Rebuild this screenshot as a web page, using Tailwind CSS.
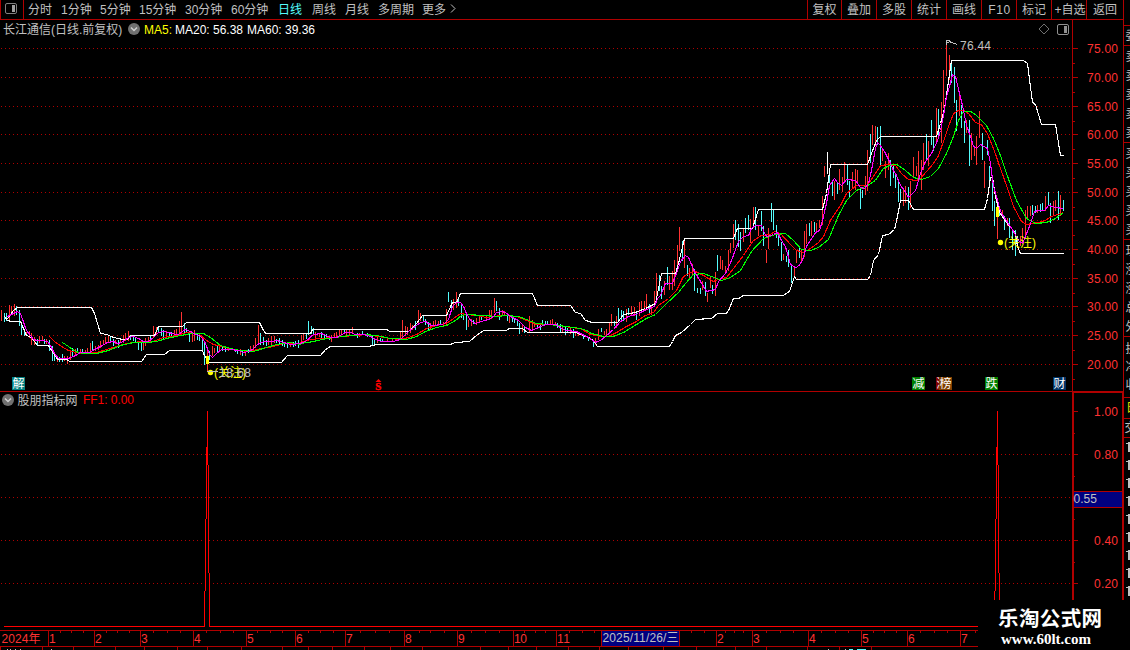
<!DOCTYPE html>
<html lang="zh-CN">
<head>
<meta charset="utf-8">
<title>长江通信 日线</title>
<script src="https://cdn.jsdelivr.net/npm/@tailwindcss/browser@4"></script>
</head>
<body class="relative flex h-[650px] w-[1130px] flex-col overflow-hidden bg-black font-['Liberation_Sans','Noto_Sans_CJK_SC',sans-serif] text-[12px] leading-[18px] text-[#c0c0c0]">

<!-- Period toolbar -->
<header class="flex h-5 w-[1124px] shrink-0 items-stretch border-r border-b border-[#b00000] leading-[20px] whitespace-nowrap">
  <div class="flex w-6 shrink-0 items-center border-x border-[#b00000] pl-1">
    <svg class="mb-0.5 h-[12px] w-[12px]" viewBox="0 0 12 12"><rect x="0.5" y="0.5" width="11" height="10" rx="1.5" fill="none" stroke="#808080"/><rect x="7" y="2" width="3" height="7" fill="#a0a0a0"/></svg>
  </div>
  <nav class="flex flex-1 pl-1">
    <span class="w-[33px]">分时</span><span class="w-[39px]">1分钟</span><span class="w-[39px]">5分钟</span><span class="w-[46px]">15分钟</span><span class="w-[46px]">30分钟</span><span class="w-[47px]">60分钟</span><span class="w-[34px] text-[#54fcfc]">日线</span><span class="w-[33px]">周线</span><span class="w-[33px]">月线</span><span class="w-[44px]">多周期</span><span class="w-[27px]">更多</span>
    <svg class="mt-1 h-[10px] w-[8px]" viewBox="0 0 8 10"><path d="M2 0.5 6 4.5 2 8.5" fill="none" stroke="#c0c0c0"/></svg>
  </nav>
  <div class="flex text-center">
    <span class="w-[34px] border-l border-[#b00000]">复权</span><span class="w-[35px] border-l border-[#b00000]">叠加</span><span class="w-[35px] border-l border-[#b00000]">多股</span><span class="w-[35px] border-l border-[#b00000]">统计</span><span class="w-[35px] border-l border-[#b00000]">画线</span><span class="w-[35px] border-l border-[#b00000] pl-px tracking-[0.6px]">F10</span><span class="w-[35px] border-l border-[#b00000]">标记</span><span class="w-[35px] border-l border-[#b00000] pl-0.5">+自选</span><span class="w-[37px] border-l border-[#b00000]">返回</span>
  </div>
</header>

<main class="flex min-h-0 flex-1">
  <section class="flex w-[1123px] shrink-0 flex-col">
    <!-- Price legend -->
    <div class="flex h-[18px] shrink-0">
      <div class="flex w-[1073px] items-center border-r border-[#b00000] pl-[3px] whitespace-nowrap">
        <span class="w-[125px] pt-0.5">长江通信(日线.前复权)</span>
        <svg class="h-[12px] w-[12px]" viewBox="0 0 12 12"><circle cx="6" cy="6" r="6" fill="#707070"/><path d="M3 4.5 6 7.5 9 4.5" fill="none" stroke="#d0d0d0" stroke-width="1.5"/></svg>
        <span class="ml-1 w-[31px] pt-0.5 text-[#ffff00]">MA5:</span>
        <span class="w-[72px] pt-0.5 text-white">MA20: 56.38</span>
        <span class="pt-0.5 text-white">MA60: 39.36</span>
        <svg class="ml-auto h-[12px] w-[12px]" viewBox="0 0 12 12"><path d="M6 1 11 6 6 11 1 6Z" fill="none" stroke="#707070"/></svg>
        <svg class="mr-[3px] ml-[7px] h-[12px] w-[12px]" viewBox="0 0 12 12"><rect x="0.5" y="1.5" width="11" height="10" rx="1.5" fill="none" stroke="#909090"/><rect x="7" y="3" width="3" height="7" fill="#909090"/></svg>
      </div>
    </div>
    <svg id="price" class="h-[353px] w-[1123px] shrink-0" viewBox="0 38 1123 353"></svg>
    <!-- Indicator pane -->
    <svg id="ind" class="h-[237px] w-[1123px] shrink-0" viewBox="0 391 1123 237"></svg>
    <!-- Time axis -->
    <svg id="time" class="h-[22px] w-[1123px] shrink-0" viewBox="0 628 1123 22"></svg>
  </section>
  <!-- Quote panel edge -->
  <aside class="flex w-[7px] shrink-0 flex-col overflow-hidden border-l border-[#b00000]">
    <svg id="side" class="h-[630px] w-[6px]" viewBox="1124 20 6 630"></svg>
  </aside>
</main>

<!-- Site mark -->
<div class="absolute right-0 bottom-0 h-[50px] w-[152px] bg-black">
  <svg class="h-full w-full" viewBox="978 600 152 50">
    <text x="998" y="626" fill="#fff" font-family="Noto Sans CJK SC" font-weight="700" font-size="20.5" textLength="104">乐淘公式网</text>
    <text x="1001" y="644" fill="#fff" font-family="Liberation Serif" font-weight="700" font-size="14.5" textLength="90" lengthAdjust="spacingAndGlyphs">www.60lt.com</text>
  </svg>
</div>

<script>
const NS = 'http://www.w3.org/2000/svg';
const RED = '#ff3232', CYAN = '#54fcfc', RULE = '#b00000';
const byId = id => document.getElementById(id);
function add(host, tag, attrs, text) {
  const el = document.createElementNS(NS, tag);
  for (const k in attrs) el.setAttribute(k, attrs[k]);
  if (text !== undefined) el.textContent = text;
  host.appendChild(el);
  return el;
}
const box = (h, x, y, w, ht, fill) => add(h, 'rect', {x, y, width: w, height: ht, fill, 'shape-rendering': 'crispEdges'});
const label = (h, x, y, s, fill, len, extra) => add(h, 'text', Object.assign({x, y, fill, 'font-size': 12}, len ? {textLength: len} : {}, extra || {}), s);
const grid = (h, y) => add(h, 'path', {d: `M1 ${y + .5}H1072`, stroke: RULE, 'stroke-dasharray': '1 3', 'shape-rendering': 'crispEdges'});

const P = byId('price'), I = byId('ind'), T = byId('time'), S = byId('side');

// Price scale
const levels = [48, 77, 106, 134, 163, 192, 220, 249, 278, 306, 335, 364];
levels.forEach((y, i) => {
  grid(P, y);
  box(P, 1073, y, 5, 1, RULE);
  box(P, 1073, y + 15, 2, 1, RULE);
  label(P, 1087, y + 5, (75 - 5 * i) + '.00', RED, 31);
});
box(P, 1072, 38, 1, 353, RULE);

// Series are stored in thirds of a pixel relative to each segment's origin.
const SEG = {
  A: [0, 280], B: [300, 270], C: [580, 140], E: [800, 30]
};
const bars = {
A: `4r90-123 13c99-126 19c100-125 28r75-125 34r78-105 43r72-108 49c78-105 58c92-138 64c128-165 73c150-168 79r158-166 88r155-175 94r160-195 103r172-197 112c178-196 118r168-190 127r170-185 133c178-192 139r178-192 148c180-215 157c200-243 163c220-245 172r228-246 178c232-246 187c222-246 193r228-243 202r230-254 211r210-240 217c205-230 226r208-225 232c205-220 241r208-220 247c208-220 256r210-218 262r205-224 271r190-218 277c183-215 286r200-215 295r195-210 301r185-205 310r180-195 316r172-190 325r170-188 331c168-190 340c178-200 346r180-192 355c180-204 361r175-190 370r165-190 376r160-185 385r153-185 391c165-180 400c170-185 406c173-190 415c183-210 424c190-213 430r188-212 436r175-200 445r172-188 451c165-185 460r138-175 469r142-165 475c138-160 484c145-168 490c150-178 499r155-168 508c160-168 514c158-170 523r150-165 529r148-172 538r125-160 544r96-160 553c130-160 559c145-160 568c155-186 577r160-188 583r150-183 592c160-180 598c163-185 607c170-215 613c190-255 622r215-275 628c215-240 637r200-230 643r205-220 652c198-220 658r195-215 667c203-214 676c205-216 685r205-213 706c208-218 712c208-222 721r208-225 727c212-228 736r215-230 745c208-220 751r200-215 760r195-210 766r175-205 775r135-195 781c160-195 790c172-195 799c180-200 805r175-195 814r170-195 823r168-190 829c178-190 838c175-195 847c180-200 853c188-202 862c190-204 871r190-203 880c188-203 886c183-198 895c180-205`,
B: `4r195-220 10r192-212 19c190-208 25c153-195 34c170-193 40c175-195 46r188-208 58r190-203 64c186-205 73c192-205 79c192-205 88c198-210 94r195-216 103r190-205 109r186-202 118r182-200 124r178-195 133c180-190 139r180-195 148r180-198 157r171-190 172c190-205 178r190-202 187c185-197 202c190-203 208r193-203 217c195-226 223c210-228 232r200-220 241c205-215 247c208-216 262r203-218 277r207-215 292r205-214 301r186-208 307r150-205 316r168-200 322r172-195 331r160-190 337r165-182 346c155-180 355r122-165 361r130-153 370c140-155 376c148-165 385c158-180 391r160-178 400r155-172 406r150-170 415r155-170 421c152-165 430r158-168 439r118-165 445c66-98 454c90-125 460r88-120 469r66-115 475c82-110 484c105-145 490c130-152 499c130-180 505r150-172 514r147-168 520c150-162 529r145-165 538r135-160 544c137-150 559r135-155 568r122-150 574r122-148 583r84-130 589c95-125 598c115-150 607r122-138 613r125-140 622c130-153 628r138-160 637c140-158 643c145-160 652c150-170 658c160-192 667r165-186 673c170-190 688r140-186 697r150-180 703r158-172 712c165-175 721c166-180 727c150-165 736c153-165 742c155-166 751r150-163 757r148-165 766r158-168 772c160-175 781c163-187 787r170-187 796c172-195 802c175-190 811r175-192 820c178-205 826r183-200 835r188-198 850c196-208 865c203-215 880c210-232 886r205-225 895r178-210 904c175-188 913r183-195 919r178-195 928r160-190 934r132-170 943c155-170 949r140-175 955c114-150 964c120-155 970r125-155 979c118-150 985c116-135`,
C: `124c510-540 130c515-543 139r507-548 145c507-525 154r500-530 163r503-528 169c515-540 178r486-530 184r485-515 193r483-512 199r462-510 208c492-520 214r498-525 223r453-490 229r400-485 238c405-455 244c440-477 253r425-467 262c382-435 268r410-450 277r393-450 283r360-440 292r315-380 298r262-335 307c305-365 313r305-385 322c375-408 328r385-422 337r372-410 343c388-453 352c445-460 361c445-462 367r425-452 376c428-470 382r460-486 391r408-445 397c435-462 406r398-468 412c347-393 421r348-387 427r360-390 436r380-400 445r330-393 451r310-340 460r252-325 466c240-300 475c252-323 481c278-335 490r265-308 496c235-280 505c225-270 511r238-310 520r202-255 526c202-270 535r255-290 544c213-275 550c260-320 559r330-370 565r265-327 574c190-248 580c208-270 589c255-295 595c280-320 604c308-365 610r342-362 619c350-368 625c330-383 634c375-430 643r385-412 649r330-370 658c318-355 664r332-365 673r275-353 679r252-313 688c250-290 694r245-290 703c247-278 709r250-280 718r240-265 727r168-255 733r80-113 748c85-130 757c122-168 763r125-182 772c130-163 778r88-150 787r113-158 793r66-130 802c73-135 808c125-175 817r97-145 826r87-150 832r90-128 841c143-208 847c150-175 856r108-165 862r30-155`,
E: `211c312-400 217r285-345 226r288-350 232c293-345 241c290-410 247r360-395 256r395-445 265r370-420 271c390-470 280c405-445 286c430-475 295c455-518 301c478-515 310r478-530 316r468-520 325c472-540 331r455-535 340r383-445 349r410-440 355r363-455 364r390-480 370r340-420 379c312-388 385r333-410 394c272-345 400c320-365 409r235-335 415c237-320 424r218-340 430r122-235 439r38-140 448r75-150 454c93-160 463c113-220 469c212-303 478r195-260 484c225-295 493c275-340 499r270-310 508c272-408 514r310-390 523r350-380 529r320-405 538r243-325 547c310-390 553r393-474 562c330-375 568c408-470 577c440-545 583c515-590 592r530-628 598c530-560 607r540-565 613c560-600 622r565-590 628c565-625 637c600-660 646c600-678 652c620-640 661r620-650 667r595-640 676r540-625 683r530-570 691r530-560 697c525-555 706c530-550 712r525-550 721c522-548 727c520-545 736r500-545 745c486-530 751c520-580 760r515-560 766r510-545 775c483-570 781r495-560 790c510-545`
};
for (const k in bars) {
  const [ox, oy] = SEG[k];
  for (const m of bars[k].matchAll(/(\d+)([rc])(\d+)-(\d+)/g)) {
    const y1 = Math.floor(m[3] / 3), y2 = Math.floor(m[4] / 3);
    box(P, ox + Math.floor(m[1] / 3), oy + y1, 1, y2 - y1, m[2] === 'r' ? RED : CYAN);
  }
}

const curves = [
['#ff0000', {
A: '148,168 163,185 185,200 205,212 225,218 250,220 290,217 320,208 350,200 380,190 420,184 460,183 490,173 530,166 560,157 595,161 620,180 640,192 665,200 700,208 745,215 785,206 820,198 850,190 900,190',
B: '0,218 30,208 60,205 100,203 130,199 160,195 200,194 235,200 270,206 300,208 325,202 350,192 380,175 410,167 440,160 460,145 480,130 500,132 530,136 560,141 600,137 625,136 650,140 680,150 710,162 745,163 780,166 810,172 840,176',
C: '0,566 30,584 60,589 85,588 110,578 140,558 170,543 195,526 220,516 235,495 265,475 290,450 310,410 330,397 345,395 370,405 400,424 415,418 440,413 460,385 490,345 520,300 545,285 570,283 583,274 600,280 630,312 650,330 670,337 690,326 715,308 730,290 750,240 780,195 800,160 830,137 862,135',
E: '202,465 225,430 242,405 265,402 285,405 305,430 325,449 350,450 362,445 380,425 400,400 415,375 430,335 445,290 460,250 475,240 490,240 505,250 525,278 545,284 562,310 580,355 600,415 620,465 640,530 665,575 680,582 715,578 735,570 755,558 789,547'}],
['#00ff00', {
A: '187,187 205,200 225,215 250,219 290,220 325,210 360,197 400,187 440,186 470,183 500,174 540,165 575,160 610,160 630,172 660,195 690,205 720,211 760,215 800,203 830,192 870,188 900,192',
B: '0,219 40,213 80,205 150,196 190,193 230,197 270,205 320,208 350,200 375,185 410,172 440,167 465,152 485,137 500,133 550,137 590,138 620,136 655,138 680,147 710,159 745,163 800,168 840,176',
C: '0,566 20,570 35,580 70,588 100,588 130,577 170,553 200,534 225,522 260,490 295,457 315,430 340,402 370,400 395,410 425,420 450,413 480,390 515,335 550,295 585,282 615,280 640,300 665,327 690,331 715,323 745,297 775,225 800,180 830,150 862,137',
E: '202,467 225,450 250,415 275,402 290,403 315,422 340,442 365,449 390,440 415,415 440,370 460,320 475,270 490,245 512,243 530,257 560,285 580,325 600,375 620,430 650,510 680,565 705,580 740,576 765,565 789,547'}],
['#ffffff', {
A: '13,114 22,116 28,108 40,90 52,82 274,82 283,100 300,160 322,163 331,170 352,174 370,178 382,178 391,166 463,166 475,139 547,139 559,127 778,127 787,145 796,160 900,160',
B: '0,190 30,190 38,178 260,178 268,184 325,184 350,160 368,136 440,136 458,97 470,97 482,70 697,70 713,106 812,106 826,127 840,130',
C: '0,520 15,540 36,547 112,547 130,523 165,518 195,505 225,490 244,400 285,400 295,370 313,295 460,295 472,265 517,265 535,208 727,208 738,160 750,73 862,73',
E: '202,403 215,370 228,330 242,319 410,319 420,280 433,235 455,91 670,91 682,100 697,218 706,222 724,283 766,283 781,376 789,376'}],
['#ffffff', {
A: '13,110 22,120 34,124 60,124 78,165 95,172 112,196 145,196 172,238 200,238 207,244 425,244 440,223 494,223 508,211 607,211 613,225 628,247 843,247 862,226 900,226',
B: '0,256 60,256 75,237 92,229 205,229 230,223 450,223 465,218 508,213 530,196 550,181 618,181 628,175 668,175 683,187 830,187 840,193',
C: '0,583 25,592 40,602 52,619 268,619 278,605 285,587 305,577 330,553 345,538 395,535 413,520 440,520 448,505 460,475 475,475 490,466 610,466 628,455 643,410 648,418 862,418',
E: '202,748 212,735 220,690 234,672 248,616 265,614 283,598 292,560 301,511 325,511 340,538 553,538 562,505 570,443 577,443 585,500 597,548 620,578 645,610 652,650 661,670 789,670'}],
['#ff00ff', {
A: '22,110 34,104 52,94 60,100 78,150 90,165 100,178 112,182 127,180 142,185 151,195 163,220 175,234 205,236 225,226 240,217 268,216 283,208 300,200 322,187 340,184 352,190 364,187 385,173 400,168 415,175 430,185 445,183 460,172 475,157 490,154 505,158 525,163 535,162 547,153 556,148 571,153 586,163 600,168 608,175 616,190 628,222 637,232 650,220 665,208 690,208 715,212 730,218 745,214 757,207 768,196 780,186 795,183 815,185 830,181 850,187 870,193 900,190',
B: '0,220 15,215 40,192 65,190 90,202 110,202 135,187 150,187 165,192 190,194 210,200 225,209 245,214 280,213 300,208 325,185 350,165 362,157 375,153 395,165 430,163 445,148 458,110 470,97 480,98 490,110 500,130 510,150 525,160 545,153 565,148 580,138 590,128 605,123 615,127 630,140 655,152 675,172 695,181 715,172 735,162 765,163 785,175 800,181 830,184 840,190',
C: '0,580 25,592 45,606 60,600 75,588 100,568 120,544 145,528 175,520 200,508 222,500 232,475 240,465 257,430 277,430 290,400 300,365 315,345 325,352 343,395 362,425 380,454 405,449 415,425 435,400 455,360 475,305 490,290 505,285 515,265 525,255 543,257 555,285 563,290 580,282 592,276 605,300 615,320 632,372 645,381 655,378 668,362 680,320 705,278 718,270 728,240 738,190 748,135 763,115 772,128 785,137 800,117 825,122 840,142',
E: '180,472 193,475 205,460 215,420 225,355 233,338 242,347 255,370 268,395 280,420 290,435 300,465 313,480 325,503 345,480 362,430 375,395 395,370 412,330 422,300 430,255 440,200 448,170 458,132 465,140 478,190 486,225 500,285 510,320 520,350 528,355 540,343 562,355 570,400 580,470 590,500 600,545 620,570 640,605 655,632 668,640 675,620 690,580 703,545 715,540 733,540 745,527 765,533 789,535'}]
];
for (const [stroke, parts] of curves) {
  const pts = [];
  for (const k in parts) {
    const [ox, oy] = SEG[k];
    for (const p of parts[k].split(' ')) {
      const [x, y] = p.split(',').map(Number);
      pts.push((ox + Math.floor(x / 3) + .5) + ',' + (oy + Math.floor(y / 3) + .5));
    }
  }
  add(P, 'polyline', {points: pts.join(' '), fill: 'none', stroke, 'stroke-width': 1.1, 'shape-rendering': 'crispEdges'});
}
box(P, 827, 152, 1, 22, '#fff');

// High and signal marks
add(P, 'path', {d: 'M946.5 45V40.5H950M949 41.5 957.5 44.5M947 42.5H949', fill: 'none', stroke: '#c0c0c0', 'shape-rendering': 'crispEdges'});
label(P, 960, 50, '76.44', '#c0c0c0', 31);
box(P, 206, 356, 3, 8, '#ff0');
box(P, 996, 207, 3, 10, '#ff0');
add(P, 'circle', {cx: 210.5, cy: 372.5, r: 2.7, fill: '#ff0'});
add(P, 'circle', {cx: 1000.5, cy: 242.5, r: 2.7, fill: '#ff0'});
label(P, 214, 377, '(关注)', '#ffff00', 32);
label(P, 1004, 247, '(关注)', '#ffff00', 32);
box(P, 207, 371, 11, 1, '#c0c0c0');
label(P, 219, 377, '18.68', '#c0c0c0', 32);

// Event badges
[[12, '解', '#008080'], [912, '减', '#008000'], [936, '涨', '#800000'], [939, '榜', '#804000'], [985, '跌', '#008000'], [1053, '财', '#003366']].forEach(([x, s, c]) => {
  box(P, x, 377, 13, 13, c);
  label(P, x + .5, 388, s, '#fff', 0);
});
add(P, 'path', {d: 'M375.5 382 378.5 379 381.5 382Z', fill: '#f00'});
label(P, 375.3, 390, 'S', '#ff0000', 0, {'font-family': 'Liberation Serif', 'font-weight': 700, 'font-size': 11, stroke: '#f00', 'stroke-width': .4});

// Indicator pane
box(I, 0, 391, 1123, 1, RULE);
add(I, 'circle', {cx: 8, cy: 400, r: 6, fill: '#707070'});
add(I, 'path', {d: 'M5 398.5 8 401.5 11 398.5', fill: 'none', stroke: '#d0d0d0', 'stroke-width': 1.5});
label(I, 17.5, 405, '股朋指标网', '#c0c0c0', 60);
label(I, 83, 404, 'FF1: 0.00', '#ff0000', 51);
[454, 497, 540, 583].forEach(y => grid(I, y));
[[411, '1.00'], [454, '0.80'], [497, ''], [540, '0.40'], [583, '0.20']].forEach(([y, s]) => {
  box(I, 1074, y, 4, 1, RULE);
  box(I, 1074, y + 22, 1, 1, RULE);
  if (s) label(I, 1094, y + 5, s, RED, 24);
});
box(I, 1072, 391, 2, 237, RULE);
box(I, 1072, 391, 51, 2, RULE);
box(I, 1122, 391, 2, 237, RULE);
box(I, 1074, 491, 48, 17, RULE);
box(I, 1074, 492, 48, 15, '#000080');
label(I, 1073.5, 503, '0.55', '#c0c0c0', 23.5);
[207, 997].forEach(x => {
  box(I, x, 411, 1, 54, '#f00');
  box(I, x - 1, 447, 1, 72, '#f00');
  box(I, x - 2, 519, 1, 72, '#f00');
  box(I, x - 3, 591, 1, 36, '#f00');
  box(I, x + 1, 465, 1, 108, '#f00');
  box(I, x + 2, 573, 1, 54, '#f00');
});
box(I, 4, 626, 200, 1, '#f00');
box(I, 209, 626, 769, 1, '#f00');

// Time axis
box(T, 0, 630, 978, 1, RULE);
box(T, 0, 646, 978, 1, RULE);
label(T, 1.5, 643, '2024年', RED, 39);
[[48, '1'], [94, '2'], [140, '3'], [193, '4'], [246, '5'], [295, '6'], [345, '7'], [404, '8'], [457, '9'], [513, '10'], [556, '11'], [716, '2'], [752, '3'], [808, '4'], [861, '5'], [907, '6'], [960, '7']].forEach(([x, s]) => {
  box(T, x, 631, 1, 15, RULE);
  label(T, x + 1, 643, s, RED, s.length > 1 ? 13 : 0);
});
[60, 71, 83, 106, 117, 129, 153, 167, 180, 206, 220, 233, 257, 270, 282, 308, 320, 333, 360, 375, 389, 419, 430, 444, 471, 485, 499, 524, 535, 545, 569, 582, 594, 691, 704, 725, 734, 743, 766, 780, 793, 821, 835, 848, 873, 884, 896, 920, 934, 947, 975].forEach(x => box(T, x, 631, 1, 2, RULE));
[0, 42, 73, 115, 144, 177, 207, 241, 282, 308, 332, 364, 390, 422, 480, 508, 536, 568, 599, 628, 663, 696, 735, 766, 807, 839, 871].forEach(x => box(T, x, 647, 1, 3, RULE));
box(T, 601, 631, 79, 15, RULE);
box(T, 602, 631, 77, 15, '#000080');
label(T, 602.5, 642, '2025/11/26/三', '#c0c0c0', 76);
[7, 10, 15, 20, 51, 828, 845].forEach(x => box(T, x, 649, 1, 1, '#c0c0c0'));
box(T, 849, 649, 4, 1, CYAN);
box(T, 857, 649, 9, 1, CYAN);

// Order book edge
[25, 45, 142, 239, 336, 397, 418, 437].forEach(y => box(S, 1124, y, 6, 1, RULE));
const rows = [[40, '委'], [61, '卖'], [80, '卖'], [99, '卖'], [118, '卖'], [137, '卖'], [158, '买'], [177, '买'], [196, '买'], [215, '买'], [234, '买'], [255, '现'], [274, '涨'], [293, '涨'], [312, '总'], [331, '外'], [353, '换'], [371, '净'], [389, '收']];
rows.forEach(([y, s]) => label(S, 1125.5, y, s, '#c0c0c0'));
label(S, 1126, 412, '日', '#e0e000');
label(S, 1124.5, 432, '交', '#c0c0c0');
for (let i = 0; i < 9; i++) {
  box(S, 1126, 443 + 18 * i, 4, 1, '#c0c0c0');
  box(S, 1128, 442 + 18 * i, 2, 10, '#c0c0c0');
}
</script>
</body>
</html>
